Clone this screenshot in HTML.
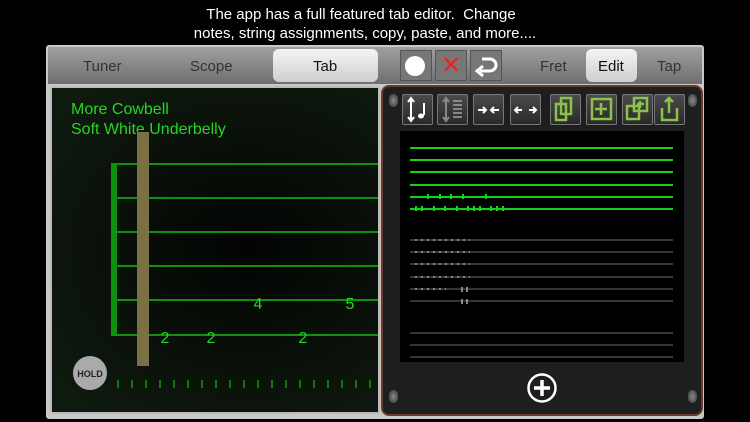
<!DOCTYPE html>
<html><head><style>
*{margin:0;padding:0;box-sizing:border-box}
body{width:750px;height:422px;background:#000;position:relative;overflow:hidden;font-family:"Liberation Sans",sans-serif}
.cap{position:absolute;left:0;width:750px;text-align:center;color:#fff;font-size:15px;line-height:19px}
.abs{position:absolute}
.btn{position:absolute;top:94px;width:31px;height:31px;background:linear-gradient(#4a4a4a,#2a2a2a);border:1px solid #777;border-radius:2px}
.screw{position:absolute;width:9px;height:13px;border-radius:5px;background:radial-gradient(#888,#333)}
</style></head><body>
<div class="cap" style="top:5px;left:-14px">The app has a full featured tab editor.&nbsp; Change</div>
<div class="cap" style="top:24px;left:-10px">notes, string assignments, copy, paste, and more....</div>
<div class="abs" style="left:46px;top:45px;width:658px;height:374px;background:#c8c8c8;border-radius:3px"></div>
<div class="abs" style="left:48px;top:47px;width:654px;height:37px;background:linear-gradient(#a0a0a0,#6e6e6e)"></div>
<div class="abs" style="left:273px;top:49px;width:105px;height:33px;background:linear-gradient(#f4f4f4,#cfcfcf);border-radius:6px"></div>
<div class="abs" style="left:586px;top:49px;width:51px;height:33px;background:linear-gradient(#f4f4f4,#cfcfcf);border-radius:6px"></div>
<div class="abs" style="left:83px;top:58px;font-size:15px;color:#333">Tuner</div>
<div class="abs" style="left:190px;top:58px;font-size:15px;color:#333">Scope</div>
<div class="abs" style="left:313px;top:58px;font-size:15px;color:#111">Tab</div>
<div class="abs" style="left:540px;top:58px;font-size:15px;color:#333">Fret</div>
<div class="abs" style="left:598px;top:58px;font-size:15px;color:#111">Edit</div>
<div class="abs" style="left:657px;top:58px;font-size:15px;color:#333">Tap</div>
<div class="abs" style="left:400px;top:50px;width:32px;height:31px;background:#777;border:1px solid #555"></div>
<div class="abs" style="left:405px;top:56px;width:20px;height:20px;border-radius:50%;background:#fff"></div>
<div class="abs" style="left:435px;top:50px;width:32px;height:31px;background:#777;border:1px solid #555;color:#e22;font-size:24px;text-align:center;line-height:29px">✕</div>
<div class="abs" style="left:470px;top:50px;width:32px;height:31px;background:#777;border:1px solid #555"></div>
<svg class="abs" style="left:474px;top:53px" width="26" height="26"><path d="M8 6 H16 A6 6 0 0 1 16 18 H6" fill="none" stroke="#fff" stroke-width="3"/><path d="M9 13 L3 18 L9 23" fill="none" stroke="#fff" stroke-width="3"/></svg>
<div class="abs" style="left:50px;top:86px;width:330px;height:328px;background:#bbb;border-radius:3px"></div>
<div class="abs" style="left:52px;top:88px;width:326px;height:324px;background:radial-gradient(ellipse at 60% 50%,#020402,#0f1a0f 90%)"></div>
<div class="abs" style="left:71px;top:100px;color:#22d822;font-size:16px;line-height:20px">More Cowbell<br>Soft White Underbelly</div>
<svg class="abs" style="left:52px;top:88px" width="326" height="324">
<g stroke="#0e920e" stroke-width="2">
<line x1="60" y1="76" x2="326" y2="76"/><line x1="60" y1="110" x2="326" y2="110"/><line x1="60" y1="144" x2="326" y2="144"/><line x1="60" y1="178" x2="326" y2="178"/><line x1="60" y1="212" x2="326" y2="212"/><line x1="60" y1="247" x2="326" y2="247"/>
</g>
<rect x="59" y="75" width="6" height="173" fill="#0e920e"/>
<rect x="85" y="44" width="12" height="234" fill="#7a7046"/>
<g fill="#22d822" font-family="Liberation Sans" font-size="16" text-anchor="middle">
<text x="113" y="255">2</text><text x="159" y="255">2</text><text x="251" y="255">2</text><text x="206" y="221">4</text><text x="298" y="221">5</text></g>
<g stroke="#0c7a0c" stroke-width="2">
<line x1="66" y1="292" x2="66" y2="300"/><line x1="80" y1="292" x2="80" y2="300"/><line x1="94" y1="292" x2="94" y2="300"/><line x1="108" y1="292" x2="108" y2="300"/><line x1="122" y1="292" x2="122" y2="300"/><line x1="136" y1="292" x2="136" y2="300"/><line x1="150" y1="292" x2="150" y2="300"/><line x1="164" y1="292" x2="164" y2="300"/><line x1="178" y1="292" x2="178" y2="300"/><line x1="192" y1="292" x2="192" y2="300"/><line x1="206" y1="292" x2="206" y2="300"/><line x1="220" y1="292" x2="220" y2="300"/><line x1="234" y1="292" x2="234" y2="300"/><line x1="248" y1="292" x2="248" y2="300"/><line x1="262" y1="292" x2="262" y2="300"/><line x1="276" y1="292" x2="276" y2="300"/><line x1="290" y1="292" x2="290" y2="300"/><line x1="304" y1="292" x2="304" y2="300"/><line x1="318" y1="292" x2="318" y2="300"/></g>
<circle cx="38" cy="285" r="17" fill="#aaa"/>
<text x="38" y="289" font-size="9" font-weight="bold" text-anchor="middle" fill="#222" font-family="Liberation Sans">HOLD</text>
</svg>
<div class="abs" style="left:381px;top:85px;width:322px;height:331px;background:#1e1e1e;border:2px solid #6a3a2a;border-radius:8px"></div>
<div class="screw" style="left:389px;top:94px"></div><div class="screw" style="left:688px;top:94px"></div>
<div class="screw" style="left:389px;top:390px"></div><div class="screw" style="left:688px;top:390px"></div>
<div class="btn" style="left:402px"></div><div class="btn" style="left:437px"></div><div class="btn" style="left:473px"></div><div class="btn" style="left:510px"></div><div class="btn" style="left:550px"></div><div class="btn" style="left:586px"></div><div class="btn" style="left:622px"></div><div class="btn" style="left:654px"></div>
<svg class="abs" style="left:0;top:0" width="750" height="422">
<g stroke="#fff" stroke-width="2" fill="none"><path d="M411 99 V120 M408 102 L411 98 L414 102 M408 117 L411 121 L414 117"/><path d="M424 103 V115"/></g>
<ellipse cx="421" cy="116" rx="3" ry="2.5" fill="#fff"/>
<g stroke="#888" stroke-width="2" fill="none"><path d="M446 99 V120 M443 102 L446 98 L449 102 M443 117 L446 121 L449 117"/><path d="M453 101h9M453 105h9M453 109h9M453 113h9M453 117h9"/></g>
<g stroke="#fff" stroke-width="2" fill="none"><path d="M478 110h8M483 107l3 3-3 3M499 110h-8M494 107l-3 3 3 3"/><path d="M515 110h7M518 107l-3 3 3 3M536 110h-7M533 107l3 3-3 3"/></g>
<g stroke="#8bc34a" stroke-width="2.5" fill="none"><rect x="556" y="104" width="10" height="16"/><rect x="561" y="98" width="10" height="16"/><rect x="592" y="99" width="19" height="20"/><path d="M601 103v12M595 109h12"/><rect x="627" y="106" width="12" height="13"/><rect x="634" y="98" width="13" height="13"/><path d="M640 101v7M637 104h7"/><path d="M662 108v12h15v-12M669 113v-14M665 102l4-4 4 4"/></g>
<rect x="400" y="131" width="284" height="231" fill="#000"/>
<g stroke="#18d018" stroke-width="2"><line x1="410" y1="148" x2="673" y2="148"/><line x1="410" y1="160" x2="673" y2="160"/><line x1="410" y1="172" x2="673" y2="172"/><line x1="410" y1="185" x2="673" y2="185"/><line x1="410" y1="197" x2="673" y2="197"/><line x1="410" y1="209" x2="673" y2="209"/></g>
<g fill="#14d814"><rect x="427" y="194" width="2" height="5"/><rect x="439" y="194" width="2" height="5"/><rect x="450" y="194" width="2" height="5"/><rect x="462" y="194" width="2" height="5"/><rect x="485" y="194" width="2" height="5"/>
<rect x="415" y="206" width="2" height="5"/><rect x="421" y="206" width="2" height="5"/><rect x="433" y="206" width="2" height="5"/><rect x="444" y="206" width="2" height="5"/><rect x="456" y="206" width="2" height="5"/><rect x="467" y="206" width="2" height="5"/><rect x="473" y="206" width="2" height="5"/><rect x="479" y="206" width="2" height="5"/><rect x="490" y="206" width="2" height="5"/><rect x="496" y="206" width="2" height="5"/><rect x="502" y="206" width="2" height="5"/></g>
<g stroke="#555" stroke-width="1.3"><line x1="410" y1="240" x2="673" y2="240"/><line x1="410" y1="252" x2="673" y2="252"/><line x1="410" y1="264" x2="673" y2="264"/><line x1="410" y1="277" x2="673" y2="277"/><line x1="410" y1="289" x2="673" y2="289"/><line x1="410" y1="301" x2="673" y2="301"/><line x1="410" y1="333" x2="673" y2="333"/><line x1="410" y1="345" x2="673" y2="345"/><line x1="410" y1="357" x2="673" y2="357"/></g>
<g stroke="#888" stroke-width="2" stroke-dasharray="2 4"><line x1="415" y1="240" x2="470" y2="240"/><line x1="415" y1="252" x2="470" y2="252"/><line x1="415" y1="264" x2="470" y2="264"/><line x1="415" y1="277" x2="470" y2="277"/><line x1="415" y1="289" x2="446" y2="289"/></g>
<g fill="#888"><rect x="461" y="287" width="2" height="5"/><rect x="466" y="287" width="2" height="5"/><rect x="461" y="299" width="2" height="5"/><rect x="466" y="299" width="2" height="5"/></g>
<circle cx="542" cy="388" r="13.5" fill="none" stroke="#fff" stroke-width="2.5"/>
<path d="M542 380v16M534 388h16" stroke="#fff" stroke-width="3.5"/>
</svg>
</body></html>
